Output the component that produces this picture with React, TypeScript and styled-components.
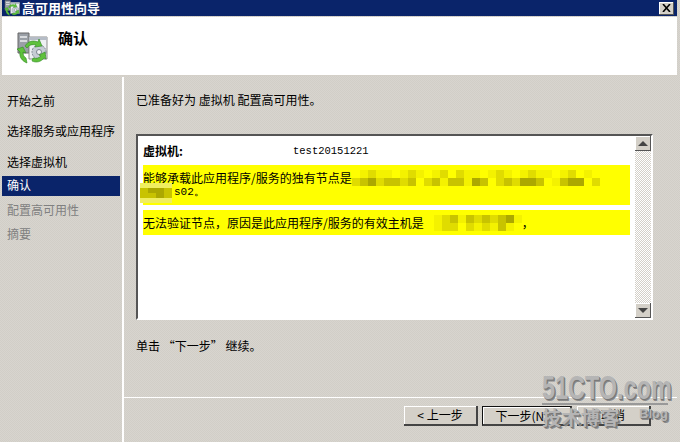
import React from "react";
import styled, { createGlobalStyle } from "styled-components";

const cjk = `"Noto Sans CJK SC", "Liberation Sans", sans-serif`;
const dither = `repeating-conic-gradient(#d8d5cf 0 25%, #d1cec7 0 50%) 0 0 / 2px 2px`;

const Global = createGlobalStyle`
  html, body {
    margin: 0;
    padding: 0;
    background: #d4d0c8;
  }
`;

const Wizard = styled.div`
  position: relative;
  width: 680px;
  height: 442px;
  overflow: hidden;
  display: flex;
  flex-direction: column;
  box-sizing: border-box;
  padding: 0 3px 0 2px;
  background: ${dither};
  font-family: ${cjk};
  font-size: 12px;
  color: #000;
`;

const TitleBar = styled.div`
  height: 16px;
  flex: none;
  display: flex;
  align-items: center;
  gap: 2px;
  padding: 0 3px 0 2px;
  background: #0a246a;
  color: #fff;
  font-size: 13px;
  line-height: 16px;
  font-weight: 700;
`;

const TitleText = styled.span`
  flex: 1;
`;

const CloseButton = styled.div`
  width: 14px;
  height: 12px;
  display: flex;
  align-items: center;
  justify-content: center;
  background: #d4d0c8;
  border-right: 1px solid #555;
  border-bottom: 1px solid #555;
  box-shadow: inset 1px 1px 0 #fff;
`;

const Header = styled.div`
  height: 59px;
  flex: none;
  margin-top: 1px;
  display: flex;
  gap: 10px;
  padding: 15px 0 0 14px;
  box-sizing: border-box;
  background: #fff;
  border-bottom: 1px solid #d4d0c8;
`;

const HeaderTitle = styled.div`
  font-size: 15px;
  line-height: 16px;
  font-weight: 700;
  margin-top: -2px;
`;

const Body = styled.div`
  flex: 1;
  min-height: 0;
  margin-top: 1px;
  display: flex;
`;

const Sidebar = styled.nav`
  width: 120px;
  flex: none;
  display: flex;
  flex-direction: column;
  padding-top: 15px;
  box-sizing: border-box;
`;

const Step = styled.div<{ $active?: boolean; $disabled?: boolean; $gap?: number }>`
  height: 20px;
  line-height: 18px;
  padding-left: 5px;
  margin-right: 2px;
  margin-bottom: ${(p) => p.$gap ?? 4}px;
  white-space: nowrap;
  background: ${(p) => (p.$active ? "#0a246a" : "transparent")};
  color: ${(p) => (p.$active ? "#fff" : p.$disabled ? "#808080" : "#000")};
`;

const Main = styled.main`
  flex: 1;
  min-width: 0;
  border-left: 2px solid #fff;
  display: flex;
  flex-direction: column;
`;

const Content = styled.div`
  flex: 1;
  padding: 15px 24px 0 12px;
`;

const Lead = styled.p`
  margin: 0 0 26px;
  height: 16px;
  line-height: 16px;
`;

const ListBox = styled.div`
  height: 186px;
  display: flex;
  box-sizing: border-box;
  border-top: 2px solid #555;
  border-left: 2px solid #555;
  border-right: 2px solid #fff;
  border-bottom: 2px solid #fff;
  background: #fff;
`;

const ListText = styled.div`
  flex: 1;
  min-width: 0;
  padding: 7px 5px 0 5px;
`;

const VmRow = styled.div`
  display: flex;
  height: 16px;
  line-height: 16px;
  margin-bottom: 6px;
`;

const VmLabel = styled.strong`
  width: 150px;
  font-weight: 700;
`;

const VmValue = styled.span`
  font-family: "Liberation Mono", monospace;
  font-size: 10.5px;
`;

const Notice = styled.div<{ $height: number }>`
  height: ${(p) => p.$height}px;
  margin-bottom: 5px;
  padding-top: 5px;
  box-sizing: border-box;
  background: #ffff00;
  line-height: 15px;
  white-space: nowrap;
`;

const NoticeLine = styled.div`
  display: flex;
  align-items: center;
  height: 15px;
`;

const Mono = styled.span`
  font-family: "Liberation Mono", monospace;
  font-size: 11px;
  margin-left: 2px;
`;

const Smudge = styled.span<{ $cols: number; $shift?: number; $row?: number }>`
  display: inline-grid;
  grid-template-columns: repeat(${(p) => p.$cols}, 8px);
  grid-auto-rows: ${(p) => p.$row ?? 8}px;
  flex: none;
  margin-left: ${(p) => p.$shift ?? 0}px;
`;

const tones = ["#ffff00", "#f4f200", "#e0dc00", "#c8c300", "#aca800", "#f0ee60"];

const Blot = styled.span<{ $tone: number }>`
  background: ${(p) => tones[p.$tone]};
`;

const Scrollbar = styled.div`
  width: 16px;
  flex: none;
  display: flex;
  flex-direction: column;
  justify-content: space-between;
  background: repeating-conic-gradient(#fff 0 25%, #d4d0c8 0 50%) 0 0 / 2px 2px;
`;

const ScrollButton = styled.div`
  height: 15px;
  display: flex;
  align-items: center;
  justify-content: center;
  background: #d4d0c8;
  box-sizing: border-box;
  border-right: 1px solid #555;
  border-bottom: 1px solid #555;
  box-shadow: inset 1px 1px 0 #fff;
`;

const Arrow = styled.span<{ $down?: boolean }>`
  width: 0;
  height: 0;
  border-left: 5px solid transparent;
  border-right: 5px solid transparent;
  ${(p) => (p.$down ? "border-top: 5px solid #444;" : "border-bottom: 5px solid #444;")}
`;

const Hint = styled.p`
  margin: 18px 0 0;
  height: 16px;
  line-height: 16px;
`;

const Footer = styled.footer`
  height: 45px;
  flex: none;
  box-sizing: border-box;
  border-top: 1px solid #fff;
  display: flex;
  gap: 4px;
  padding: 8px 0 0 280px;
`;

const Button = styled.button<{ $primary?: boolean; $left?: number }>`
  width: ${(p) => (p.$primary ? 90 : 74)}px;
  height: 20px;
  padding: 0;
  margin-left: ${(p) => p.$left ?? 0}px;
  box-sizing: border-box;
  background: #d4d0c8;
  font-family: ${cjk};
  font-size: 12px;
  line-height: 16px;
  color: #000;
  border: ${(p) => (p.$primary ? "1px solid #111" : "none")};
  border-right: 2px solid #444;
  border-bottom: 2px solid #444;
  box-shadow: inset 1px 1px 0 #fff;
`;

const Watermark = styled.div`
  position: absolute;
  left: 542px;
  top: 371px;
  width: 126px;
  color: #b5b5b5;
  font-family: "Liberation Sans", sans-serif;
  font-weight: 700;
  text-shadow: 1px 1px 0 #777, 2px 2px 0 #8a8a8a;
`;

const WatermarkBrand = styled.div`
  width: 175px;
  font-size: 33px;
  line-height: 34px;
  white-space: nowrap;
  transform-origin: left top;
  transform: scaleX(0.71);
`;

const WatermarkRule = styled.div`
  height: 2px;
  margin-top: -2px;
  background: #999;
`;

const WatermarkRow = styled.div`
  display: flex;
  align-items: flex-start;
  justify-content: space-between;
  margin-top: 1px;
`;

const WatermarkCn = styled.span`
  font-family: ${cjk};
  font-size: 19px;
  line-height: 22px;
  letter-spacing: 0.5px;
`;

const WatermarkBlog = styled.span`
  font-size: 13px;
  line-height: 14px;
  margin-top: 1px;
`;

const ClusterIcon = ({ size }: { size: number }) => (
  <svg width={size} height={size} viewBox="0 0 32 32" style={{ flex: "none" }}>
    <path d="M2 1h11v20H2z" fill="#9a9fa6" stroke="#666" />
    <path d="M4 4h7v2H4zM4 8h7v2H4z" fill="#d8dadd" />
    <path d="M13 5h18v22H13z" fill="#eef0f3" stroke="#8d8d8d" />
    <path d="M13 5h18v3H13z" fill="#b5bcc6" />
    <circle cx="23" cy="20" r="7" fill="#c6ccd4" stroke="#7c8590" strokeDasharray="2 1" />
    <circle cx="23" cy="20" r="2.5" fill="#f2f3f5" stroke="#7c8590" />
    <path d="M9 14c3-5 8-6 13-4l1-3 3 7-7 1 1-2c-4-1-7 0-9 3z" fill="#5fc13c" stroke="#2f8a22" strokeWidth=".6" />
    <path d="M1 17l6-2 3 6-3-1c0 3 1 5 3 6l1 5c-5-2-8-6-7-11z" fill="#5fc13c" stroke="#2f8a22" strokeWidth=".6" />
    <path d="M16 29c4 2 9 1 12-3l2 1-1-7-6 3 2 1c-2 2-5 3-8 2z" fill="#5fc13c" stroke="#2f8a22" strokeWidth=".6" />
  </svg>
);

const CloseIcon = () => (
  <svg width="9" height="8" viewBox="0 0 9 8">
    <path d="M1 0l7 8M8 0L1 8" stroke="#000" strokeWidth="1.6" fill="none" />
  </svg>
);

const Blotches = ({ rows, shift, row }: { rows: string[]; shift?: number; row?: number }) => (
  <Smudge $cols={rows[0].length} $shift={shift} $row={row}>
    {rows.join("").split("").map((t, i) => (
      <Blot key={i} $tone={Number(t)} />
    ))}
  </Smudge>
);

const steps = [
  { label: "开始之前", gap: 10 },
  { label: "选择服务或应用程序", gap: 11 },
  { label: "选择虚拟机", gap: 3 },
  { label: "确认", active: true, gap: 5 },
  { label: "配置高可用性", disabled: true },
  { label: "摘要", disabled: true },
];

export default function App() {
  return (
    <>
      <Global />
      <Wizard>
        <TitleBar>
          <ClusterIcon size={16} />
          <TitleText>高可用性向导</TitleText>
          <CloseButton>
            <CloseIcon />
          </CloseButton>
        </TitleBar>
        <Header>
          <ClusterIcon size={32} />
          <HeaderTitle>确认</HeaderTitle>
        </Header>
        <Body>
          <Sidebar>
            {steps.map((s) => (
              <Step key={s.label} $active={s.active} $disabled={s.disabled} $gap={s.gap}>
                {s.label}
              </Step>
            ))}
          </Sidebar>
          <Main>
            <Content>
              <Lead>已准备好为 虚拟机 配置高可用性。</Lead>
              <ListBox>
                <ListText>
                  <VmRow>
                    <VmLabel>虚拟机:</VmLabel>
                    <VmValue>test20151221</VmValue>
                  </VmRow>
                  <Notice $height={40}>
                    <NoticeLine>
                      能够承载此应用程序/服务的独有节点是
                      <Blotches
                        rows={[
                          "01211012101202110121012110120100",
                          "23423323023133143023244301344020",
                        ]}
                      />
                    </NoticeLine>
                    <NoticeLine>
                      <Blotches rows={["5555", "3443", "3343", "5555"]} shift={-3} row={5} />
                      <Mono>s02。</Mono>
                    </NoticeLine>
                  </Notice>
                  <Notice $height={25}>
                    <NoticeLine>
                      无法验证节点，原因是此应用程序/服务的有效主机是
                      <Blotches
                        rows={["012313232341", "012202121310"]}
                        shift={2}
                      />
                      ，
                    </NoticeLine>
                  </Notice>
                </ListText>
                <Scrollbar>
                  <ScrollButton>
                    <Arrow />
                  </ScrollButton>
                  <ScrollButton>
                    <Arrow $down />
                  </ScrollButton>
                </Scrollbar>
              </ListBox>
              <Hint>单击 “下一步” 继续。</Hint>
            </Content>
            <Footer>
              <Button>&lt; 上一步</Button>
              <Button $primary>下一步(N) &gt;</Button>
              <Button $left={1}>取消</Button>
            </Footer>
          </Main>
        </Body>
        <Watermark>
          <WatermarkBrand>51CTO.com</WatermarkBrand>
          <WatermarkRule />
          <WatermarkRow>
            <WatermarkCn>技术博客</WatermarkCn>
            <WatermarkBlog>Blog</WatermarkBlog>
          </WatermarkRow>
        </Watermark>
      </Wizard>
    </>
  );
}
